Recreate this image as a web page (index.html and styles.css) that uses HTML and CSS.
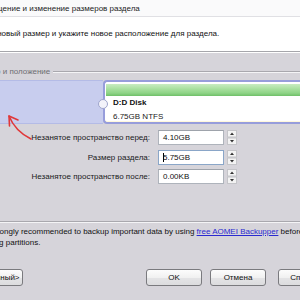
FILE: index.html
```html
<!DOCTYPE html>
<html lang="ru">
<head>
<meta charset="utf-8">
<title>Перемещение и изменение размеров раздела</title>
<link rel="stylesheet" href="styles.css">
</head>
<body>
<div class="page">
  <div class="win">
    <div class="titlebar"><span class="title">Перемещение и изменение размеров раздела</span></div>
    <div class="header"><span class="desc">Выберите новый размер и укажите новое расположение для раздела.</span></div>
    <div class="body">
      <div class="group">
        <div class="legend-row">
          <span class="rule-left"></span>
          <span class="legend">Размер и положение</span>
          <span class="rule"></span>
        </div>
        <div class="diskmap">
          <div class="free"></div>
          <div class="part">
            <div class="bar"></div>
            <div class="pname">D:D Disk</div>
            <div class="pinfo">6.75GB NTFS</div>
            <span class="handle"></span>
          </div>
        </div>
        <div class="fields">
          <div class="field-row">
            <span class="label">Незанятое пространство перед:</span>
            <span class="input">4.10GB</span>
            <svg class="spin" width="10" height="15" viewBox="0 0 10 15"><rect x="0.5" y="0.5" width="9" height="6.5" fill="#f3f3f3" stroke="#c4c4c8"/><rect x="0.5" y="8" width="9" height="6.5" fill="#f3f3f3" stroke="#c4c4c8"/><polygon points="3,5 5,2.6 7,5" fill="#333"/><polygon points="3,10 7,10 5,12.4" fill="#333"/></svg>
          </div>
          <div class="field-row">
            <span class="label">Размер раздела:</span>
            <span class="input focus"><span class="caret"></span>5.75GB</span>
            <svg class="spin" width="10" height="15" viewBox="0 0 10 15"><rect x="0.5" y="0.5" width="9" height="6.5" fill="#f3f3f3" stroke="#c4c4c8"/><rect x="0.5" y="8" width="9" height="6.5" fill="#f3f3f3" stroke="#c4c4c8"/><polygon points="3,5 5,2.6 7,5" fill="#333"/><polygon points="3,10 7,10 5,12.4" fill="#333"/></svg>
          </div>
          <div class="field-row">
            <span class="label">Незанятое пространство после:</span>
            <span class="input">0.00KB</span>
            <svg class="spin" width="10" height="15" viewBox="0 0 10 15"><rect x="0.5" y="0.5" width="9" height="6.5" fill="#f3f3f3" stroke="#c4c4c8"/><rect x="0.5" y="8" width="9" height="6.5" fill="#f3f3f3" stroke="#c4c4c8"/><polygon points="3,5 5,2.6 7,5" fill="#333"/><polygon points="3,10 7,10 5,12.4" fill="#333"/></svg>
          </div>
        </div>
        <div class="group-bottom"></div>
      </div>
      <p class="note">It is strongly recommended to backup important data by using <a class="link" href="#">free AOMEI Backupper</a> before<br>resizing partitions.</p>
      <div class="buttons">
        <span class="btn wide">Расширенный&gt;</span>
        <span class="btn ok">OK</span>
        <span class="btn cancel">Отмена</span>
        <span class="btn help">Справка</span>
      </div>
    </div>
  </div>
  <svg class="arrow" width="300" height="300" viewBox="0 0 300 300">
    <path d="M9 116 Q15 131 31 139" fill="none" stroke="#e0383a" stroke-width="1.6" stroke-linecap="round"/>
    <path d="M18 120 L9 116 L9.5 126" fill="none" stroke="#e0383a" stroke-width="1.6" stroke-linecap="round" stroke-linejoin="round"/>
  </svg>
</div>
</body>
</html>
```
FILE: styles.css
```css
html, body {
  margin: 0;
  padding: 0;
}
body {
  background: #d6d4da;
  font-family: "Liberation Sans", Arial, sans-serif;
  font-size: 8px;
  color: #111;
}
.page {
  position: relative;
  width: 300px;
  height: 300px;
  overflow: hidden;
}
.win {
  margin-left: -60px;
  width: 420px;
  white-space: nowrap;
}
.titlebar {
  height: 17px;
  box-sizing: border-box;
  background: #fafafb;
  border-bottom: 1px solid #e0e0e4;
  padding-left: 27px;
  line-height: 17px;
  color: #222;
}
.header {
  height: 34px;
  background: #ffffff;
  border-bottom: 1px solid #a6a6ab;
  padding-left: 18px;
  line-height: 34px;
}
.body {
  border-top: 1px solid #ffffff;
  padding-top: 14px;
}
.group {
  margin-left: 8px;
}
.legend-row {
  display: flex;
  align-items: center;
  height: 10px;
}
.rule-left {
  width: 22px;
  border-top: 1px solid #a9a8ae;
  border-bottom: 1px solid #f4f4f6;
}
.legend {
  padding: 0 3px;
  color: #6e6e72;
  line-height: 10px;
}
.rule {
  flex: 1;
  border-top: 1px solid #a9a8ae;
  border-bottom: 1px solid #f4f4f6;
}
.diskmap {
  display: flex;
  height: 44px;
  margin-top: 3px;
  margin-left: 10px;
}
.free {
  width: 145px;
  background: #c8cdee;
  border-top: 1px solid #b4bbe6;
  border-bottom: 1px solid #b4bbe6;
  box-sizing: border-box;
}
.part {
  position: relative;
  flex: 1;
  box-sizing: border-box;
  border: 2px solid #979ddb;
  border-right: none;
  border-radius: 4px 0 0 4px;
  background: #ffffff;
  padding: 2px 0 0 0;
  box-shadow: inset 0 -1px 0 #fff8dc;
}
.bar {
  height: 12px;
  margin-left: 1px;
  background: linear-gradient(#c9ecc2 0%, #a5de9c 45%, #8fd487 75%, #6fbf68 100%);
}
.pname {
  font-weight: bold;
  line-height: 10px;
  margin-top: 2px;
  padding-left: 8px;
  color: #111;
}
.pinfo {
  line-height: 10px;
  margin-top: 4px;
  padding-left: 8px;
  color: #222;
}
.handle {
  position: absolute;
  left: -7px;
  top: 17px;
  width: 8px;
  height: 8px;
  border-radius: 50%;
  background: #f3f3fa;
  border: 1px solid #9fa5cc;
}
.fields {
  display: flex;
  flex-direction: column;
  gap: 4.5px;
  margin-top: 6px;
}
.field-row {
  display: flex;
  align-items: center;
  height: 15px;
}
.label {
  width: 202px;
  text-align: right;
  color: #1a1a1a;
}
.input {
  margin-left: 8px;
  width: 66px;
  height: 15px;
  box-sizing: border-box;
  background: #ffffff;
  border: 1px solid #aeb3bb;
  border-top-color: #9ea3ab;
  padding-left: 4px;
  line-height: 13px;
  display: flex;
  align-items: center;
  color: #111;
}
.input.focus {
  border-color: #8aa6c8;
}
.caret {
  display: inline-block;
  width: 1px;
  height: 9px;
  background: #000;
  margin-right: -1px;
}
.spin {
  margin-left: 3px;
  display: block;
}
.group-bottom {
  margin-top: 37px;
  border-top: 1px solid #a9a8ae;
  border-bottom: 1px solid #f4f4f6;
  margin-left: -8px;
}
.note {
  margin: 3px 0 0 0;
  padding-left: 36px;
  line-height: 11px;
  color: #111;
}
.link {
  color: #2a2ad0;
  text-decoration: underline;
}
.buttons {
  display: flex;
  margin-top: 21px;
  padding-left: 19px;
}
.btn {
  box-sizing: border-box;
  width: 56px;
  height: 17px;
  line-height: 15px;
  text-align: center;
  border: 1px solid #7a7a7e;
  border-radius: 3px;
  background: linear-gradient(#fcfcfc 0%, #f1f1f1 50%, #e4e4e6 51%, #dcdcde 100%);
  color: #111;
}
.btn.wide {
  width: 64px;
}
.btn.ok {
  margin-left: 123px;
}
.btn.cancel {
  margin-left: 8px;
}
.btn.help {
  margin-left: 12px;
}
.arrow {
  position: absolute;
  left: 0;
  top: 0;
  pointer-events: none;
}
```
